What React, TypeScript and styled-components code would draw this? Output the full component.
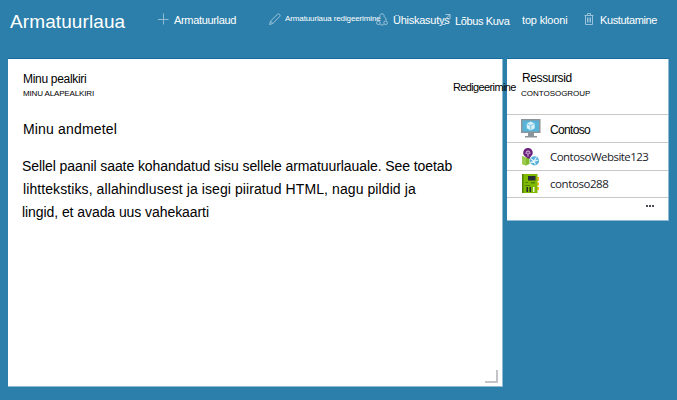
import React from "react";
import styled, { createGlobalStyle } from "styled-components";

const Global = createGlobalStyle`
  body { margin: 0; background: #2d7fab; }
  * { box-sizing: border-box; }
`;

const Page = styled.div`
  width: 677px;
  height: 400px;
  overflow: hidden;
  background: #2d7fab;
  font-family: "Liberation Sans", Arial, sans-serif;
  color: #000;
`;

const Header = styled.header`
  display: flex;
  height: 59px;
  padding-left: 10px;
  color: #fff;
`;

const Title = styled.h1`
  flex: none;
  width: 148px;
  margin: 9px 0 0;
  font-size: 19px;
  font-weight: 400;
  line-height: 25px;
  letter-spacing: 0.1px;
`;

const Toolbar = styled.nav`
  display: flex;
  align-items: flex-start;
`;

const Tool = styled.div<{ $width: number }>`
  display: flex;
  flex: none;
  width: ${(p) => p.$width}px;
  padding-top: 12px;
  white-space: nowrap;

  svg {
    flex: none;
    display: block;
  }
`;

const ToolLabel = styled.span<{ $indent: number; $size?: number; $track?: number; $drop?: number }>`
  flex: none;
  margin-left: ${(p) => p.$indent}px;
  padding-top: ${(p) => p.$drop ?? 0}px;
  font-size: ${(p) => p.$size ?? 11}px;
  line-height: 16px;
  letter-spacing: ${(p) => p.$track ?? 0}px;
`;

const SmallToolLabel = styled(ToolLabel)`
  margin-top: -1px;
`;

const Board = styled.main`
  display: grid;
  grid-template-columns: 495px 162px;
  column-gap: 4px;
  align-items: start;
  padding-left: 8px;
`;

const Card = styled.section<{ $height: number }>`
  position: relative;
  height: ${(p) => p.$height}px;
  background: #fff;
  border-right: 1px solid #8ebbd3;
  border-bottom: 1px solid #8ebbd3;
  box-shadow: 0 -1px 0 #166d9e;
  white-space: nowrap;
`;

const CardHead = styled.div<{ $top: number; $left: number }>`
  height: 55px;
  padding: ${(p) => p.$top}px 0 0 ${(p) => p.$left}px;
`;

const Heading = styled.h2<{ $track: number }>`
  margin: 0;
  font-size: 12px;
  font-weight: 400;
  line-height: 16px;
  letter-spacing: ${(p) => p.$track}px;
`;

const Subheading = styled.div<{ $top: number; $left: number; $track: number }>`
  margin: ${(p) => p.$top}px 0 0 ${(p) => p.$left}px;
  font-size: 8px;
  line-height: 12px;
  letter-spacing: ${(p) => p.$track}px;
`;

const EditLink = styled.a`
  position: absolute;
  z-index: 2;
  left: 445px;
  top: 20px;
  font-size: 11px;
  line-height: 16px;
  letter-spacing: -0.63px;
`;

const Content = styled.div`
  padding: 5px 0 0 14px;
  font-size: 14px;
`;

const ContentTitle = styled.h3`
  margin: 0 0 16px 1px;
  font-size: 14px;
  font-weight: 400;
  line-height: 20px;
  letter-spacing: 0.17px;
`;

const Line = styled.div<{ $track: number; $indent?: number }>`
  margin-left: ${(p) => p.$indent ?? 0}px;
  line-height: 23px;
  letter-spacing: ${(p) => p.$track}px;
`;

const ResizeGrip = styled.div`
  position: absolute;
  right: 4px;
  bottom: 3px;
  width: 13px;
  height: 13px;
  border: solid #c4c4c8;
  border-width: 0 2px 2px 0;
`;

const Resource = styled.div<{ $height: number }>`
  display: flex;
  align-items: center;
  height: ${(p) => p.$height}px;
  padding-left: 14px;
  border-top: 1px solid #c8c8c8;

  svg {
    flex: none;
    display: block;
  }
`;

const ResourceName = styled.span<{ $humanist?: boolean; $track: number; $drop: number }>`
  margin-left: 9px;
  padding-top: ${(p) => p.$drop}px;
  font-family: ${(p) => (p.$humanist ? '"Open Sans", "Noto Sans"' : '"Liberation Sans", Arial')}, sans-serif;
  font-size: ${(p) => (p.$humanist ? 11.5 : 12)}px;
  line-height: 16px;
  letter-spacing: ${(p) => p.$track}px;
  color: ${(p) => (p.$humanist ? "#22222a" : "#000")};
`;

const More = styled.div`
  display: flex;
  justify-content: flex-end;
  gap: 1px;
  padding: 7px 14px 0 0;
  border-top: 1px solid #c8c8c8;
`;

const Dot = styled.i`
  width: 2px;
  height: 2px;
  background: #4a4a55;
`;

const PlusIcon = () => (
  <svg width="11" height="14" viewBox="0 0 11 14" stroke="#8fbdd5" fill="none">
    <path d="M5.5 1.5v11M0 7.5h10.5" />
  </svg>
);

const PencilIcon = () => (
  <svg width="12" height="14" viewBox="0 0 12 14" stroke="#a5cade" strokeWidth="0.9" fill="none">
    <path d="M.6 12.5l.9-3.4L8.6 2.2Q9.6 1.4 10.6 2.4T10.7 4.5L3.8 11.5zM1.5 9.1l2.3 2.4" />
  </svg>
);

const ShareIcon = () => (
  <svg width="12" height="15" viewBox="0 0 12 15" stroke="#a5cade" strokeWidth="0.9" fill="none">
    <path d="M3.8 4.5Q1.8 5.8 1.8 8.6M8.2 4.5Q10.2 5.8 10.2 8.6M4.2 12.6q1.8.9 3.6 0" />
    <path d="M3.9 4.6a2.2 2.2 0 1 1 4.2 0" />
    <circle cx="2.4" cy="10.8" r="1.8" />
    <circle cx="9.6" cy="10.8" r="1.8" />
  </svg>
);

const ExpandIcon = () => (
  <svg width="10" height="14" viewBox="0 0 10 14" stroke="#a5cade" fill="none">
    <path d="M4.5 2.5h4.5v4.5M9 2.5L1.5 10M0 6.5v6h4.5" />
  </svg>
);

const TrashIcon = () => (
  <svg width="10" height="14" viewBox="0 0 10 14" stroke="#a5cade" fill="none">
    <path d="M.5 3.5h9M3.5 3V1.5h3V3M1.5 3.5v9h7v-9M3.5 5.5v5M5 5.5v5M6.5 5.5v5" strokeWidth="0.9" />
  </svg>
);

const MonitorIcon = () => (
  <svg width="20" height="19" viewBox="0 0 20 19">
    <path fill="#8b949a" d="M0 0h19.5v14H0zM7 14h6v3h3v1.5H4V17h3z" />
    <path fill="#56b4d9" d="M1.5 1.5H18v11H1.5z" />
    <path fill="#d9f2fa" d="M9.7 2.5l4 2v4.8l-4 2.2-4-2.2V4.5z" />
    <path stroke="#56b4d9" strokeWidth=".7" fill="none" d="M5.7 4.6l4 2.1 4-2.1M9.7 6.7v4.6" />
  </svg>
);

const WebsiteIcon = () => (
  <svg width="20" height="18" viewBox="0 0 20 18">
    <path fill="#7fba2c" d="M1 8l4 1.8L8.5 8v8L5 17.5 1 16z" />
    <path fill="#9bca4c" d="M1 8l4 1.8v7.7L1 16z" />
    <path fill="#68217a" d="M7 0a4.7 4.7 0 0 1 3 8.3L8.2 11 6 9.8 3.8 8.2A4.7 4.7 0 0 1 7 0z" />
    <path fill="none" stroke="#dfc9e4" d="M5.2 6V4.3Q5.2 3 7 3t1.8 1.3V6M7 4.5v4" />
    <circle cx="13.5" cy="12.8" r="4.6" fill="#56b1d9" />
    <path stroke="#e5f6fc" strokeWidth="1.2" fill="none" d="M10 11l3 2.2 2.4-3.7M13 13.2l1.4 3.2M9.5 14.5l7.8-2.5" />
  </svg>
);

const BoardIcon = () => (
  <svg width="20" height="20" viewBox="0 0 20 20">
    <path fill="#f5ba20" d="M16 3h2v4h-2zM16 8.5h2v3h-2zM16 13h2v3h-2z" />
    <path fill="#7fba00" d="M1 0h15.5v19H1z" />
    <path fill="#528000" d="M1 0h1.5v19H1zM4 8h3v1H4zM10 8h4v1.5h-4zM4 11h5v1H4z" />
    <path fill="#252d35" d="M7 2h7.5v4.5H7zM5.5 13H7v5H5.5zM8.5 13H10v5H8.5z" />
    <path fill="#eff7dd" d="M12 13h1.5v5H12z" />
  </svg>
);

export default function App() {
  return (
    <Page>
      <Global />
      <Header>
        <Title>Armatuurlaua</Title>
        <Toolbar>
          <Tool $width={111}>
            <PlusIcon />
            <ToolLabel $indent={5} $track={-0.33}>Armatuurlaud</ToolLabel>
          </Tool>
          <Tool $width={107}>
            <PencilIcon />
            <SmallToolLabel $indent={4} $size={8} $track={-0.12}>Armatuurlaua redigeerimine</SmallToolLabel>
          </Tool>
          <Tool $width={65}>
            <ShareIcon />
            <ToolLabel $indent={5} $track={-0.25}>Ühiskasutys</ToolLabel>
          </Tool>
          <Tool $width={81}>
            <ExpandIcon />
            <ToolLabel $indent={4} $track={-0.37} $drop={1}>Lõbus Kuva</ToolLabel>
          </Tool>
          <Tool $width={62}>
            <ToolLabel $indent={0} $track={-0.16}>top klooni</ToolLabel>
          </Tool>
          <Tool $width={80}>
            <TrashIcon />
            <ToolLabel $indent={6} $track={-0.38}>Kustutamine</ToolLabel>
          </Tool>
        </Toolbar>
      </Header>
      <Board>
        <Card $height={328}>
          <CardHead $top={12} $left={15}>
            <Heading $track={-0.31}>Minu pealkiri</Heading>
            <Subheading $top={1} $left={0} $track={-0.15}>MINU ALAPEALKIRI</Subheading>
          </CardHead>
          <EditLink>Redigeerimine</EditLink>
          <Content>
            <ContentTitle>Minu andmetel</ContentTitle>
            <Line $track={-0.08}>Sellel paanil saate kohandatud sisu sellele armatuurlauale. See toetab</Line>
            <Line $track={0.09} $indent={1}>lihttekstiks, allahindlusest ja isegi piiratud HTML, nagu pildid ja</Line>
            <Line $track={-0.07}>lingid, et avada uus vahekaarti</Line>
          </Content>
          <ResizeGrip />
        </Card>
        <Card $height={162}>
          <CardHead $top={11} $left={15}>
            <Heading $track={-0.4}>Ressursid</Heading>
            <Subheading $top={2} $left={-1} $track={-0.02}>CONTOSOGROUP</Subheading>
          </CardHead>
          <Resource $height={28}>
            <MonitorIcon />
            <ResourceName $track={-0.65} $drop={3}>Contoso</ResourceName>
          </Resource>
          <Resource $height={28}>
            <WebsiteIcon />
            <ResourceName $humanist $track={-0.53} $drop={0}>ContosoWebsite123</ResourceName>
          </Resource>
          <Resource $height={27}>
            <BoardIcon />
            <ResourceName $humanist $track={-0.42} $drop={0}>contoso288</ResourceName>
          </Resource>
          <More>
            <Dot />
            <Dot />
            <Dot />
          </More>
        </Card>
      </Board>
    </Page>
  );
}
